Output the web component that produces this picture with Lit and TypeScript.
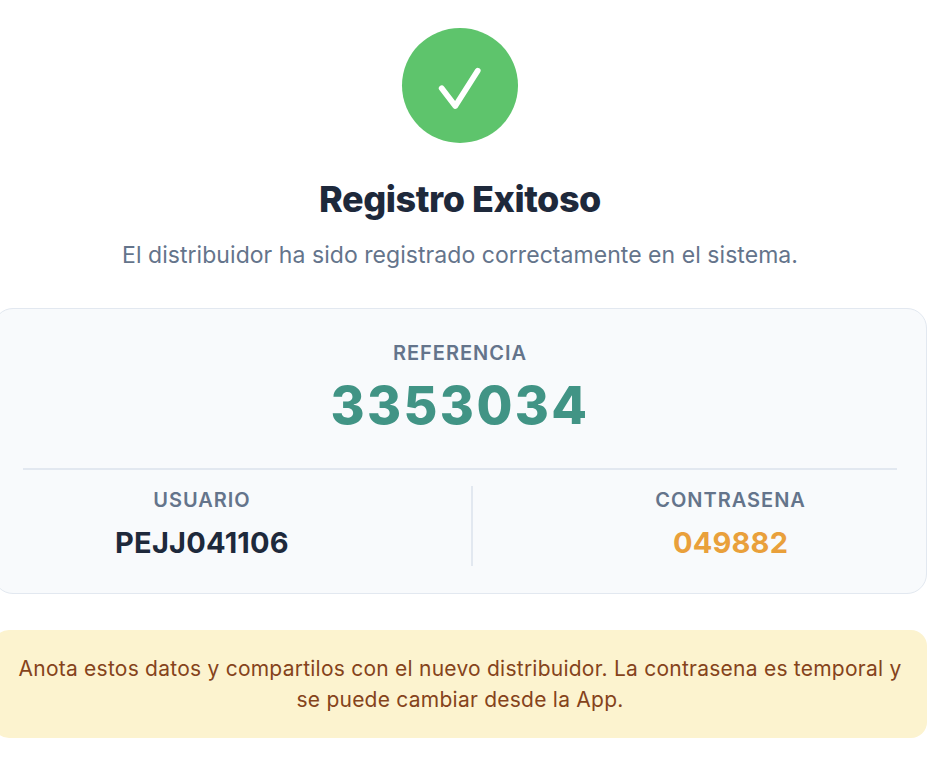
import { LitElement, html, css } from "lit";
import { customElement } from "lit/decorators.js";

@customElement("app-root")
export class AppRoot extends LitElement {
  static styles = css`
    :host {
      display: block;
      height: 764px;
      overflow: hidden;
      background: #fff;
      font-family: Inter, "Liberation Sans", sans-serif;
    }
    .page {
      box-sizing: border-box;
      width: 934px;
      margin-left: -7px;
      padding-top: 28px;
      display: flex;
      flex-direction: column;
      align-items: center;
    }
    .circle {
      width: 116px;
      height: 115px;
      border-radius: 50%;
      background: #5ec46c;
    }
    .circle svg {
      display: block;
      width: 116px;
      height: 115px;
    }
    h1 {
      margin: 35px 0 0;
      font-size: 36px;
      line-height: 42px;
      font-weight: 800;
      letter-spacing: -0.45px;
      color: #1e293b;
    }
    .sub {
      margin: 20px 0 0;
      font-size: 23px;
      line-height: 30px;
      letter-spacing: 0.05px;
      color: #64748b;
    }
    .card {
      box-sizing: border-box;
      width: 100%;
      height: 286px;
      margin-top: 38px;
      padding: 32px 29px 0;
      background: #f8fafc;
      border: 1px solid #e2e8f0;
      border-radius: 20px;
    }
    .label {
      font-size: 20px;
      line-height: 24px;
      font-weight: 600;
      letter-spacing: 1px;
      color: #64748b;
      text-align: center;
    }
    .ref {
      margin: 10px 0 31px;
      font-size: 52px;
      line-height: 62px;
      font-weight: 800;
      letter-spacing: 2.4px;
      color: #419485;
      text-align: center;
    }
    .cols {
      padding: 16px 0 0 1px;
      border-top: 2px solid #e2e8f0;
      display: flex;
      justify-content: space-around;
    }
    .col {
      padding-top: 2px;
      text-align: center;
    }
    .sep {
      width: 2px;
      height: 80px;
      background: #e2e8f0;
    }
    .val {
      margin-top: 13px;
      font-size: 29px;
      line-height: 36px;
      font-weight: 700;
      letter-spacing: 0.2px;
      color: #1e293b;
    }
    .val.pw {
      color: #e9a03b;
    }
    .note {
      box-sizing: border-box;
      width: 100%;
      height: 108px;
      margin-top: 36px;
      padding: 23px 20px 0;
      background: #fcf3cf;
      border-radius: 16px;
      font-size: 21px;
      line-height: 31px;
      letter-spacing: 0.24px;
      color: #85431b;
      text-align: center;
    }
  `;

  render() {
    return html`
      <div class="page">
        <div class="circle">
          <svg viewBox="0 0 116 115" fill="none" aria-hidden="true">
            <path d="M39.7 60.3 L53.3 78 L75.7 42.7" stroke="#fff" stroke-width="5.8" stroke-linecap="round" stroke-linejoin="round" />
          </svg>
        </div>
        <h1>Registro Exitoso</h1>
        <p class="sub">El distribuidor ha sido registrado correctamente en el sistema.</p>
        <div class="card">
          <div class="label">REFERENCIA</div>
          <div class="ref">3353034</div>
          <div class="cols">
            <div class="col">
              <div class="label">USUARIO</div>
              <div class="val">PEJJ041106</div>
            </div>
            <div class="sep"></div>
            <div class="col">
              <div class="label">CONTRASENA</div>
              <div class="val pw">049882</div>
            </div>
          </div>
        </div>
        <div class="note">Anota estos datos y compartilos con el nuevo distribuidor. La contrasena es temporal y se puede cambiar desde la App.</div>
      </div>
    `;
  }
}
